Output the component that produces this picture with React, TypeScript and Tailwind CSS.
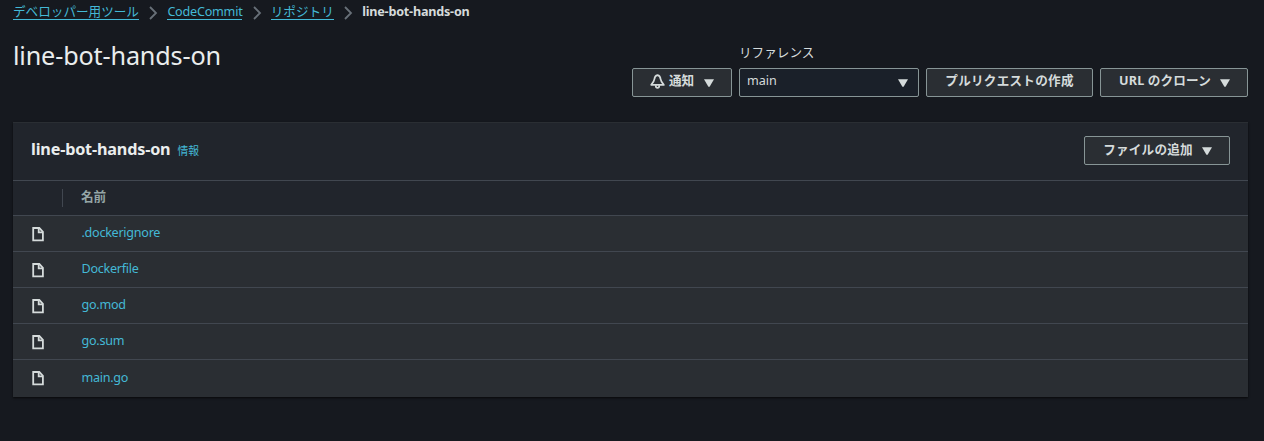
import type { ReactNode } from 'react';

const files = ['.dockerignore', 'Dockerfile', 'go.mod', 'go.sum', 'main.go'];

function Chevron() {
  return (
    <svg className="mx-[9.200px] mt-[4px] h-[14px] w-[10px] shrink-0" viewBox="0 0 10 14" fill="none" stroke="#687078" strokeWidth="1.8">
      <path d="M2 1 8 7 2 13" />
    </svg>
  );
}

function Caret() {
  return (
    <svg className="h-[8px] w-[10px] shrink-0" viewBox="0 0 10 8" fill="#d5dbdb">
      <path d="M0 .300H10L5.600 7.700H4.400Z" />
    </svg>
  );
}

function Bell() {
  return (
    <svg className="mb-[2px] h-[15px] w-[15px] shrink-0" viewBox="0 0 15 15" fill="none" stroke="#d5dbdb" strokeWidth="1.7" strokeLinejoin="round">
      <path d="M7.500 1.200C5.300 1.700 4.600 3.200 4.400 5.200C4.200 7.300 3.400 8.300 1.200 10.900H13.800C11.600 8.300 10.800 7.300 10.600 5.200C10.400 3.200 9.700 1.700 7.500 1.200Z" />
      <path d="M5.800 11.200V12C5.800 13.200 6.500 13.900 7.500 13.900S9.200 13.200 9.200 12V11.200" />
    </svg>
  );
}

function FileIcon() {
  return (
    <svg className="h-[15px] w-[12px] shrink-0 translate-y-px group-last:translate-y-0" viewBox="0 0 12 15" fill="none" stroke="#d5dbdb" strokeWidth="1.8">
      <path d="M1.200 1H7.300L10.900 4.800V13.300H1.200Z" />
      <path d="M6.700 1V5.300H10.900" />
    </svg>
  );
}

function Button({ className, children }: { className: string; children: ReactNode }) {
  return (
    <button className={`flex h-[29px] items-center justify-center rounded-[2px] border border-[#879596] bg-[#2a2e33] font-bold whitespace-nowrap text-[#d5dbdb] ${className}`}>
      {children}
    </button>
  );
}

export default function App() {
  return (
    <main className="h-[441px] overflow-hidden bg-[#16191f] pr-4 pl-[13px] font-['Noto_Sans','Noto_Sans_CJK_JP',sans-serif] text-[12.6px] leading-[18px] text-[#d5dbdb]">
      <nav className="flex h-[20px] items-start pt-[2px] leading-[20px] text-[#44b9d6]">
        <a className="h-[18px] w-[126px] border-b border-current whitespace-nowrap">デベロッパー用ツール</a>
        <Chevron />
        <a className="h-[18px] w-[75px] border-b border-current tracking-[-0.22px] whitespace-nowrap">CodeCommit</a>
        <Chevron />
        <a className="h-[18px] w-[63px] border-b border-current whitespace-nowrap">リポジトリ</a>
        <Chevron />
        <span className="font-bold tracking-[-0.2px] text-[#d5dbdb]">line-bot-hands-on</span>
      </nav>

      <header className="flex h-[77px] items-end justify-between">
        <h1 className="mb-[26px] text-[25.2px] leading-[32px] tracking-[-0.15px] text-[#eaeded]">line-bot-hands-on</h1>
        <div className="flex items-end gap-[7px]">
          <Button className="w-[100px]">
            <Bell />
            <span className="mr-[10px] ml-[4px] -translate-y-[2px]">通知</span>
            <Caret />
          </Button>
          <div className="w-[180px]">
            <div className="mb-[6px]">リファレンス</div>
            <div className="flex h-[29px] items-center justify-between rounded-[2px] border border-[#879596] bg-[#1a2029] pr-[10px] pl-[7px]">
              <span className="-translate-y-[2px]">main</span>
              <Caret />
            </div>
          </div>
          <Button className="w-[167px]"><span className="-translate-y-[2px] tracking-[0.25px]">プルリクエストの作成</span></Button>
          <Button className="w-[148px] pl-px">
            <span className="mr-[9px] -translate-y-[2px] tracking-[0.15px]">URL のクローン</span>
            <Caret />
          </Button>
        </div>
      </header>

      <section className="mt-[25px] h-[275px] border-t border-[#2a2e33] bg-[#2a2e33] shadow-[0_1px_2px_#000a]">
        <div className="flex h-[58px] items-center justify-between border-b border-[#414750] bg-[#21252c] px-[18px] pb-[2px]">
          <h2 className="flex items-baseline pb-[2px] text-[16.2px] leading-[22px] font-bold text-[#eaeded]">
            <span className="tracking-[-0.18px]">line-bot-hands-on</span>
            <a className="ml-[7px] text-[10.8px] font-normal text-[#44b9d6]">情報</a>
          </h2>
          <Button className="w-[146px] pl-px">
            <span className="mr-[9px] -translate-y-px tracking-[0.2px]">ファイルの追加</span>
            <Caret />
          </Button>
        </div>
        <div className="flex h-[35px] items-center border-b border-[#414750] bg-[#21252c] font-bold text-[#95a5a6]">
          <div className="h-[18px] w-[50px] border-r border-[#414750]" />
          <span className="ml-[18px] -translate-y-px">名前</span>
        </div>
        <ul>
          {files.map((file) => (
            <li key={file} className="group flex h-[36px] items-center border-b border-[#414750] pl-[19px] last:border-b-0">
              <FileIcon />
              <a className="ml-[37.5px] -translate-y-px tracking-[-0.28px] text-[#44b9d6] group-last:translate-y-0">{file}</a>
            </li>
          ))}
        </ul>
      </section>
    </main>
  );
}
